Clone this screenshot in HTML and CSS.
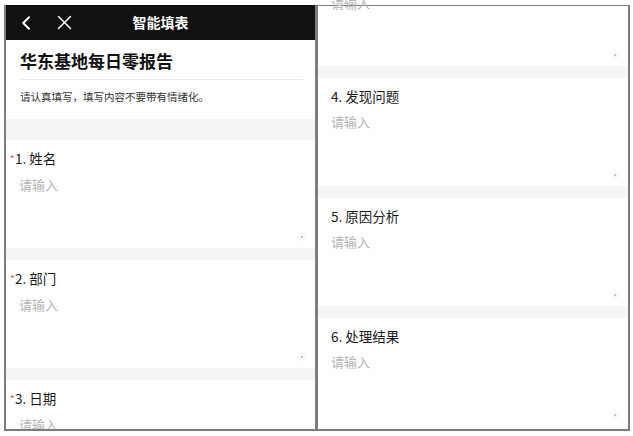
FILE: index.html
```html
<!DOCTYPE html>
<html lang="zh-CN">
<head>
<meta charset="utf-8">
<title>智能填表</title>
<link rel="stylesheet" href="styles.css">
</head>
<body>
<div class="screens">
  <div class="phone phone-left">
    <div class="navbar">
      <span class="nav-icon nav-back">
        <svg width="10" height="14" viewBox="0 0 10 14"><path d="M8 1.2 L2.2 7 L8 12.8" fill="none" stroke="#fff" stroke-width="2" stroke-linecap="round" stroke-linejoin="round"/></svg>
      </span>
      <span class="nav-icon nav-close">
        <svg width="15" height="15" viewBox="0 0 15 15"><path d="M1.5 1.5 L13.5 13.5 M13.5 1.5 L1.5 13.5" fill="none" stroke="#fff" stroke-width="1.5" stroke-linecap="round"/></svg>
      </span>
      <span class="nav-title">智能填表</span>
    </div>
    <div class="intro">
      <h1 class="form-title">华东基地每日零报告</h1>
      <p class="form-desc">请认真填写，填写内容不要带有情绪化。</p>
    </div>
    <div class="band band-first"></div>
    <div class="q">
      <div class="q-label required"><span class="star">*</span>1. 姓名</div>
      <div class="q-input">请输入</div>
      <span class="resize-dot"></span>
    </div>
    <div class="band"></div>
    <div class="q">
      <div class="q-label required"><span class="star">*</span>2. 部门</div>
      <div class="q-input">请输入</div>
      <span class="resize-dot"></span>
    </div>
    <div class="band"></div>
    <div class="q">
      <div class="q-label required"><span class="star">*</span>3. 日期</div>
      <div class="q-input">请输入</div>
      <span class="resize-dot"></span>
    </div>
  </div>
  <div class="phone phone-right">
    <div class="q q-partial">
      <div class="q-label required"><span class="star">*</span>3. 日期</div>
      <div class="q-input">请输入</div>
      <span class="resize-dot"></span>
    </div>
    <div class="band"></div>
    <div class="q">
      <div class="q-label">4. 发现问题</div>
      <div class="q-input">请输入</div>
      <span class="resize-dot"></span>
    </div>
    <div class="band"></div>
    <div class="q">
      <div class="q-label">5. 原因分析</div>
      <div class="q-input">请输入</div>
      <span class="resize-dot"></span>
    </div>
    <div class="band"></div>
    <div class="q">
      <div class="q-label">6. 处理结果</div>
      <div class="q-input">请输入</div>
      <span class="resize-dot"></span>
    </div>
  </div>
</div>
</body>
</html>
```

FILE: styles.css
```css
html, body {
  margin: 0;
  padding: 0;
  background: #fff;
}
body {
  font-family: "Noto Sans CJK SC", "Noto Sans", sans-serif;
  color: #333;
}
.screens {
  display: flex;
  padding: 5px 0 0 4px;
}
.phone {
  box-sizing: border-box;
  width: 313px;
  height: 426px;
  background: #fff;
  display: flex;
  flex-direction: column;
  border-bottom: 2px solid #7d7d7d;
}
.phone-left {
  border-left: 2px solid #7d7d7d;
  border-right: 2px solid #7d7d7d;
  overflow: hidden;
}
.phone-right {
  border-top: 1px solid #7d7d7d;
  border-left: 1px solid #7d7d7d;
  border-right: 2px solid #7d7d7d;
}
.navbar {
  flex: none;
  height: 35px;
  background: #111;
  display: flex;
  align-items: center;
  position: relative;
}
.nav-icon {
  display: flex;
  align-items: center;
}
.nav-back {
  margin-left: 15px;
}
.nav-close {
  margin-left: 26px;
}
.nav-title {
  position: absolute;
  left: 0;
  right: 0;
  text-align: center;
  color: #fff;
  font-size: 14px;
  font-weight: bold;
  line-height: 35px;
  pointer-events: none;
}
.intro {
  flex: none;
  padding: 0 12px 0 14px;
}
.form-title {
  margin: 0;
  padding: 9px 0 6px;
  line-height: 24px;
  font-size: 17px;
  font-weight: bold;
  color: #111;
  border-bottom: 1px solid #ececec;
}
.form-desc {
  margin: 0;
  padding: 8px 0 13px;
  line-height: 18px;
  font-size: 10.5px;
  color: #333;
}
.band {
  flex: none;
  height: 12px;
  background: #f4f4f4;
}
.band-first {
  height: 21px;
}
.q {
  flex: none;
  box-sizing: border-box;
  height: 108px;
  padding: 8px 14px 0 13px;
  background: #fff;
  display: flex;
  flex-direction: column;
}
.q-partial {
  margin-top: -48px;
  background: transparent;
}
.q-label {
  font-size: 13.5px;
  line-height: 20px;
  color: #1a1a1a;
}
.q-label.required {
  margin-left: -9px;
}
.star {
  display: inline-block;
  width: 5px;
  color: #e2524a;
  font-size: 10px;
  vertical-align: 1px;
}
.q-input {
  margin-top: 6px;
  font-size: 13px;
  line-height: 20px;
  color: #b3b3b3;
}
.resize-dot {
  margin-top: auto;
  align-self: flex-end;
  width: 2px;
  height: 2px;
  margin-right: -2px;
  margin-bottom: 10px;
  background: #b8b8b8;
  border-radius: 1px;
  box-shadow: 0 0 0 3px #fafafa;
}
```
